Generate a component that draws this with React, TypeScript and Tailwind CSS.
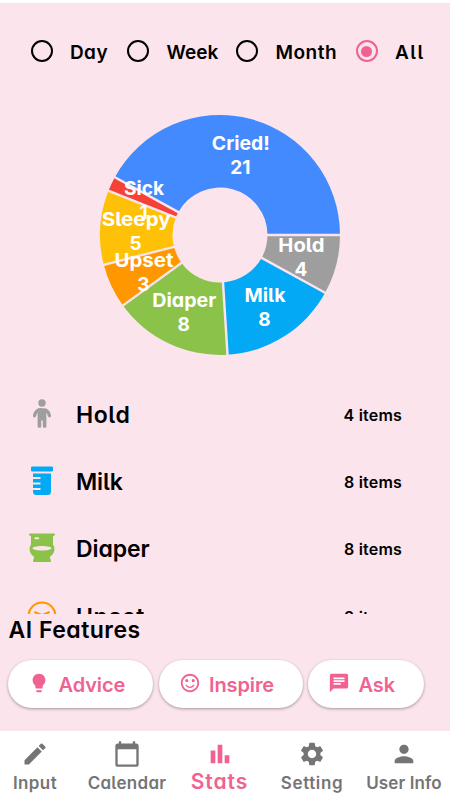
import React from 'react'
import {
    MdBarChart,
    MdCalendarToday,
    MdChat,
    MdEdit,
    MdLightbulb,
    MdPerson,
    MdSentimentSatisfiedAlt,
    MdSettings,
} from 'react-icons/md'

const CHART = { cx: 121, cy: 121, outer: 120, inner: 47.5, label: 84 }

const SLICES = [
    { name: 'Hold', value: 4, color: '#9e9e9e', width: 46 },
    { name: 'Milk', value: 8, color: '#03a9f4', width: 41 },
    { name: 'Diaper', value: 8, color: '#8bc34a', width: 64 },
    { name: 'Upset', value: 3, color: '#ff9800', width: 59 },
    { name: 'Sleepy', value: 5, color: '#ffc107', width: 69 },
    { name: 'Sick', value: 1, color: '#f44336', width: 40 },
    { name: 'Cried!', value: 21, color: '#448aff', width: 58 },
]

const PERIODS = [
    { name: 'Day', cell: 'w-[96.5px]', text: 'tracking-[0.4px]' },
    { name: 'Week', cell: 'w-[109px]', text: 'tracking-[0px]' },
    { name: 'Month', cell: 'w-[119.5px]', text: 'tracking-[0.5px]' },
    { name: 'All', cell: 'w-[80px]', text: 'tracking-[1.5px]' },
]

function point(radius: number, degrees: number) {
    const angle = (degrees * Math.PI) / 180
    return [CHART.cx + radius * Math.cos(angle), CHART.cy + radius * Math.sin(angle)]
}

function slicePath(start: number, end: number) {
    const { outer, inner } = CHART
    const [a, b, c, d] = [point(outer, start), point(outer, end), point(inner, end), point(inner, start)]
    return `M${a}A${outer} ${outer} 0 0 1 ${b}L${c}A${inner} ${inner} 0 0 0 ${d}Z`
}

function DonutChart() {
    const total = SLICES.reduce((sum, slice) => sum + slice.value, 0)
    let angle = 0
    const slices = SLICES.map((slice) => {
        const start = angle
        angle += (slice.value / total) * 360
        return { ...slice, start, end: angle }
    })

    return (
        <svg width="242" height="242" viewBox="0 0 242 242" className="block">
            {slices.map((slice) => (
                <path key={slice.name} d={slicePath(slice.start, slice.end)} fill={slice.color} />
            ))}
            {slices.map((slice) => {
                const [x1, y1] = point(CHART.inner - 1, slice.start)
                const [x2, y2] = point(CHART.outer + 1, slice.start)
                return <line key={slice.name} x1={x1} y1={y1} x2={x2} y2={y2} stroke="#fbe4ec" strokeWidth="2.4" />
            })}
            {slices.map((slice) => {
                const [x, y] = point(CHART.label, (slice.start + slice.end) / 2)
                return (
                    <g key={slice.name} fill="#fff" textAnchor="middle" className="text-[19px] font-bold">
                        <text x={x} y={y - 4} textLength={slice.width} lengthAdjust="spacingAndGlyphs">
                            {slice.name}
                        </text>
                        <text x={x - 0.5} y={y + 20}>
                            {slice.value}
                        </text>
                    </g>
                )
            })}
        </svg>
    )
}

function HoldIcon() {
    return (
        <svg width="30" height="30" viewBox="0 0 30 30" fill="#9e9e9e">
            <circle cx="15" cy="4" r="3.7" />
            <path d="M15 9c-4 0-7.300 2.500-8.700 7" stroke="#9e9e9e" strokeWidth="0" />
            <path
                d="M11.500 11C9.500 12 8 14 7.500 16.800M18.500 11c2 1 3.500 3 4 5.800"
                fill="none"
                stroke="#9e9e9e"
                strokeWidth="3.200"
                strokeLinecap="round"
            />
            <path d="M15 9.200c-2.200 0-3.800.5-4.400 1.800v16.300a1.500 1.500 0 0 0 1.500 1.500h.7a1.400 1.400 0 0 0 1.400-1.400V21.500h1.600v5.900a1.400 1.400 0 0 0 1.400 1.400h.7a1.500 1.500 0 0 0 1.500-1.500V11c-.6-1.300-2.200-1.800-4.400-1.800Z" />
        </svg>
    )
}

function MilkIcon() {
    return (
        <svg width="24" height="30" viewBox="0 0 24 30" fill="#03a9f4">
            <rect x="1" y="0.5" width="22" height="5" rx="1.3" />
            <path d="M3 7.5h18V25.5a3.5 3.5 0 0 1-3.5 3.5h-11A3.5 3.5 0 0 1 3 25.500V24h7.500v-2H3v-3.500h7.500v-2H3V13h7.500v-2H3Z" />
        </svg>
    )
}

function DiaperIcon() {
    return (
        <svg width="26" height="30" viewBox="0 0 26 30" fill="#8bc34a">
            <path
                fillRule="evenodd"
                d="M1.200.5h23.600a.8.8 0 0 1 .5 2L24 3.200v8.500c1 1.300 1.500 2.500 1.500 4 0 3.500-1.800 6-4.500 8v.8c0 1.500 1 2.300 1 3.500 0 .8-.5 1-1.200 1H5.200c-.7 0-1.200-.2-1.200-1 0-1.200 1-2 1-3.500v-.8C2.300 22 .5 19 .5 15.700c0-1.500.5-2.700 1.500-4V3.200L.7 2.500a.8.8 0 0 1 .5-2ZM6.500 4.200a1.200 1 0 0 0 0 2h2.500a1.200 1 0 0 0 0-2ZM13 13c-5.500 0-9.500 1-9.500 2.200s4 2.300 9.500 2.300 9.500-1.100 9.500-2.300S18.500 13 13 13Z"
            />
        </svg>
    )
}

function UpsetIcon() {
    return (
        <svg width="30" height="30" viewBox="0 0 30 30" fill="none" stroke="#ff9800" strokeWidth="2">
            <circle cx="15" cy="15" r="13.5" />
            <path d="m8 11.300 5.500 2.200m8.500-2.200-5.500 2.200M10 22c2-3 8-3 10 0" strokeLinecap="round" />
        </svg>
    )
}

const ITEMS = [
    { name: 'Hold', count: 4, icon: <HoldIcon />, text: 'tracking-[0.6px]' },
    { name: 'Milk', count: 8, icon: <MilkIcon />, text: 'tracking-[-0.1px]' },
    { name: 'Diaper', count: 8, icon: <DiaperIcon />, text: 'tracking-[-0.1px]' },
    { name: 'Upset', count: 3, icon: <UpsetIcon />, text: 'tracking-[0.7px]' },
]

const FEATURES = [
    { name: 'Advice', Icon: MdLightbulb, width: 'w-[145px]' },
    { name: 'Inspire', Icon: MdSentimentSatisfiedAlt, width: 'w-[144px]' },
    { name: 'Ask', Icon: MdChat, width: 'w-[116px]' },
]

const TABS = [
    { name: 'Input', Icon: MdEdit, cell: 'w-[70px]', text: 'tracking-[0.4px]' },
    { name: 'Calendar', Icon: MdCalendarToday, cell: 'w-[114px]', text: 'tracking-[0.3px]' },
    { name: 'Stats', Icon: MdBarChart, cell: 'w-[71px]', text: 'tracking-[1px]', active: true },
    { name: 'Setting', Icon: MdSettings, cell: 'w-[114px]', text: 'tracking-[0.6px]' },
    { name: 'User Info', Icon: MdPerson, cell: 'w-[70px]', text: 'tracking-[0.1px]' },
]

export default function App() {
    return (
        <div className="flex flex-col w-[450px] h-[800px] overflow-hidden border-t-[3px] border-white bg-[#fbe4ec] text-black font-['Inter',sans-serif] [font-feature-settings:'cv05','cv11']">
            <div className="flex shrink-0 items-center h-24 pl-[30.5px]">
                {PERIODS.map(({ name, cell, text }) => (
                    <label key={name} className={`flex shrink-0 items-center ${cell}`}>
                        {name === 'All' ? (
                            <span className="flex items-center justify-center size-[22px] mr-[17.5px] shrink-0 rounded-full border-2 border-[#f06292]">
                                <span className="size-[11px] rounded-full bg-[#f06292]" />
                            </span>
                        ) : (
                            <span className="size-[22px] mr-[17.5px] shrink-0 rounded-full border-2 border-black" />
                        )}
                        <span className={`pt-[3px] text-[19px] leading-6 font-semibold ${text}`}>{name}</span>
                    </label>
                ))}
            </div>

            <div className="flex shrink-0 justify-center h-[282px] pt-[15.4px] pr-[11px]">
                <DonutChart />
            </div>

            <div className="h-[233px] shrink-0 overflow-hidden">
                {ITEMS.map(({ name, count, icon, text }) => (
                    <div key={name} className="flex items-center h-[67.3px] pl-[27px] pr-12">
                        <div className="flex w-[30px] justify-center pb-0.5">{icon}</div>
                        <div className={`ml-[19px] pt-px flex-1 text-[23px] font-semibold ${text}`}>{name}</div>
                        <div className="text-[16px] font-semibold tracking-[0.2px]">{count} items</div>
                    </div>
                ))}
            </div>

            <h2 className="shrink-0 h-[46px] pl-[8.5px] text-[23px] leading-8 font-semibold tracking-[0.5px]">
                AI Features
            </h2>

            <div className="flex shrink-0 gap-[5.5px] h-[71px] pl-2">
                {FEATURES.map(({ name, Icon, width }) => (
                    <button
                        key={name}
                        className={`flex shrink-0 items-center h-12 pl-5 rounded-full bg-white text-[#f06292] shadow-[0_1px_3px_rgba(0,0,0,0.35)] ${width}`}
                    >
                        <Icon className="size-[22px] mb-0.5" />
                        <span className="ml-[8.5px] mt-0.5 text-[20px] leading-6 font-semibold tracking-[-0.1px]">
                            {name}
                        </span>
                    </button>
                ))}
            </div>

            <nav className="flex shrink-0 h-[69px] bg-white text-[#757575]">
                {TABS.map(({ name, Icon, cell, text, active }) => (
                    <div
                        key={name}
                        className={`flex shrink-0 flex-col items-center whitespace-nowrap ${cell} ${active ? 'text-[#f06292]' : ''}`}
                    >
                        <Icon className="size-7 mt-[9px]" />
                        <span
                            className={`font-semibold leading-6 ${active ? 'mt-0.5 text-[21px]' : 'mt-[3px] text-[17px]'} ${text}`}
                        >
                            {name}
                        </span>
                    </div>
                ))}
            </nav>
        </div>
    )
}
